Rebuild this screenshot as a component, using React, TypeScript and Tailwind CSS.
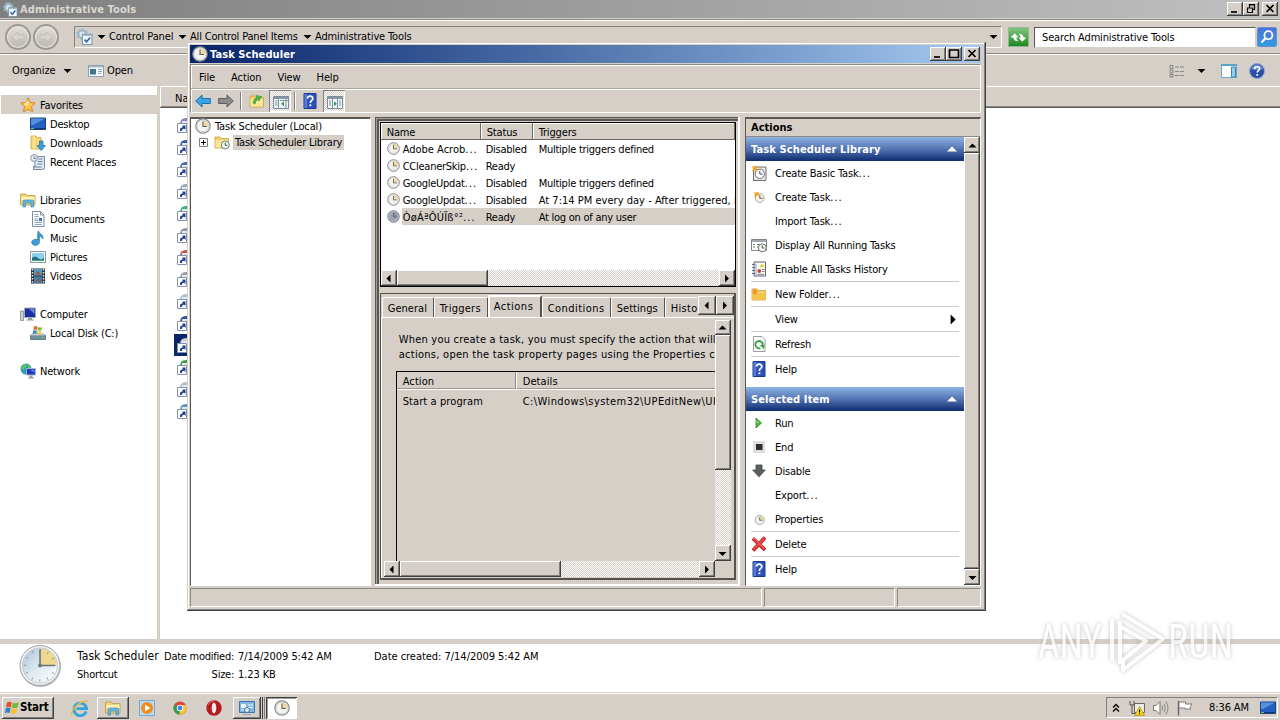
import type { ReactNode } from "react";
import clsx from "clsx";

const RAISED =
  "bg-[#d5cfc8] shadow-[inset_-1px_-1px_#404040,inset_1px_1px_#fff,inset_-2px_-2px_#808080]";
const TRACK =
  "[background:repeating-conic-gradient(#fff_0_25%,#d5cfc8_0_50%)_0_0/2px_2px]";

type IconProps = { className?: string };

const Svg = ({
  className,
  children,
  box = 16,
}: IconProps & { children: ReactNode; box?: number }) => (
  <svg
    viewBox={`0 0 ${box} ${box}`}
    className={clsx("shrink-0", className ?? "h-4 w-4")}
    fill="none"
  >
    {children}
  </svg>
);

const ClockIcon = ({
  className,
  face = "#f4f4ee",
  slice = "#f0d9a0",
}: IconProps & { face?: string; slice?: string }) => (
  <Svg className={className}>
    <circle cx="8" cy="8" r="7.2" fill={face} stroke="#85898c" strokeWidth="1.2" />
    <path d="M8 8V2.4A5.6 5.6 0 0 1 13.6 8Z" fill={slice} />
    <circle cx="8" cy="8" r="5.9" stroke="#c9ccce" strokeWidth="0.8" />
    <path d="M8 3.5V8.5H12" stroke="#5a5f66" strokeWidth="1.1" />
  </Svg>
);

const BigClockIcon = () => (
  <Svg className="h-[44px] w-[44px]" box={44}>
    <defs>
      <linearGradient id="face" x1="0" y1="0" x2="1" y2="1">
        <stop offset="0" stopColor="#a9c3d6" />
        <stop offset="0.5" stopColor="#dfeaf0" />
        <stop offset="1" stopColor="#fff" />
      </linearGradient>
    </defs>
    <circle cx="22.5" cy="22.5" r="20.5" fill="#b9bcbe" />
    <circle cx="22" cy="21.5" r="20" fill="#f1f2f2" stroke="#9da3a6" />
    <circle cx="22" cy="21.5" r="17.5" fill="url(#face)" stroke="#c3cacd" />
    <path d="M22 21.5V4.5A17 17 0 0 1 39 21.5Z" fill="#f0d690" />
    <circle cx="22" cy="21.5" r="15" stroke="#8b9aa4" strokeWidth="2.4" strokeDasharray="1 6.854" strokeDashoffset="0.5" />
    <path d="M22 5.5V21.5H37" stroke="#67747d" strokeWidth="1.6" />
    <circle cx="22" cy="21.5" r="2" fill="#6c7880" />
  </Svg>
);

const HelpIcon = ({ className }: IconProps) => (
  <Svg className={className}>
    <path d="M2 0.5H14V15.5H2Z" fill="#2f52b8" stroke="#1d3b94" />
    <path d="M2.5 1H5V15H2.5Z" fill="#5b7cd6" />
    <path d="M5.6 5.6C5.6 2.4 10.8 2.4 10.8 5.4C10.8 7.6 8.3 7.4 8.3 10" stroke="#fff" strokeWidth="1.7" />
    <path d="M7.4 11.4H9.3V13.2H7.4Z" fill="#fff" />
  </Svg>
);

const FolderIcon = ({ className, children }: IconProps & { children?: ReactNode }) => (
  <Svg className={className}>
    <path d="M1 3H6L7.5 4.5H14.5V14H1Z" fill="#f3cf6b" stroke="#c99f3c" strokeWidth="0.8" />
    <path d="M1.5 6H14V13.5H1.5Z" fill="#fbe597" />
    {children}
  </Svg>
);

const LibraryIcon = ({ className }: IconProps) => (
  <Svg className={className}>
    <path d="M0.5 2H6L7.5 3.5H15V13H0.5Z" fill="#f2d578" stroke="#b99b46" strokeWidth="0.8" />
    <path d="M1.5 5H14.5V8H1.5Z" fill="#fdf2b8" />
    <path d="M3 15V9.5Q3 8 5 8H12Q13.5 8 13.5 9.5V15H11V11H5.5V15Z" fill="#64b7e0" stroke="#3b86b5" strokeWidth="0.7" />
  </Svg>
);

const ArrowIcon = ({ back }: { back?: boolean }) => (
  <Svg className="h-4 w-4">
    <path
      d={back ? "M0.7 8L7 2V5.5H15.3V10.5H7V14Z" : "M15.3 8L9 2V5.5H0.7V10.5H9V14Z"}
      fill={back ? "#3da5e4" : "#8c8c8c"}
      stroke={back ? "#1c6fae" : "#5b5b5b"}
    />
  </Svg>
);

const PaneIcon = ({ right }: { right?: boolean }) => (
  <Svg className="h-4 w-4">
    <path d="M0.5 2.5H15.5V14.5H0.5Z" fill="#f2f5f7" stroke="#808a94" />
    <path d="M1 3H15V5H1Z" fill="#8397ab" />
    <path d={right ? "M10.5 5V14M12 7H14M12 9H14M12 11H14M2 7H4M2 9H4M2 11H4M5.5 5V14" : "M5.5 5V14M2 7H4.5M2 9H4.5M2 11H4.5M7 6.5H15M13 5V14"} stroke="#7c90a6" />
    <path d={right ? "M7 7.2L9.8 9.7L7 12.2Z" : "M11 7.2L8 9.7L11 12.2Z"} fill="#2e9a4a" />
  </Svg>
);

const StarIcon = () => (
  <Svg>
    <path d="M8 0.8L10.1 5.4L15.2 6L11.5 9.5L12.5 14.8L8 12.2L3.5 14.8L4.5 9.5L0.8 6L5.9 5.4Z" fill="#fbc64b" stroke="#dc8420" />
    <path d="M8 3L9.2 6.3L7 9L4 7Z" fill="#ffe79c" />
  </Svg>
);

const DesktopIcon = ({ className }: IconProps) => (
  <Svg className={className}>
    <path d="M0.5 2H15.5V13.5H0.5Z" fill="#2460c0" stroke="#1a4183" />
    <path d="M1 2.5H15L3 9H1Z" fill="#5590df" />
    <path d="M1 12H15V13H1Z" fill="#16386f" />
    <path d="M1 12H4V13H1Z" fill="#63c06c" />
  </Svg>
);

const DownloadsIcon = () => (
  <Svg>
    <path d="M1 1H6L7 2.5H11V14H1Z" fill="#f6d875" stroke="#c7a444" strokeWidth="0.8" />
    <path d="M4 1V14" stroke="#fff3bd" />
    <path d="M9.5 6H13V10.5H15.5L11.3 15.5L7 10.5H9.5Z" fill="#3d9be0" stroke="#1f6aae" strokeWidth="0.7" />
  </Svg>
);

const RecentIcon = () => (
  <Svg>
    <path d="M4.5 2.5H14.5V13.5Q14.5 15.5 12.5 15.5H3.5V12.5H5Z" fill="#dfe9f1" stroke="#77889a" />
    <circle cx="4" cy="4" r="3.4" fill="#eef1f4" stroke="#8794a1" />
    <path d="M4 2V4.5H6M8.5 5H12.5M7.5 7.5H12.5M7.5 10H12.5M3.5 13H11.5" stroke="#6b85a2" />
  </Svg>
);

const DocumentIcon = () => (
  <Svg>
    <path d="M2.5 0.5H10.5L14 4V15.5H2.5Z" fill="#fbfdff" stroke="#7d8da2" />
    <path d="M10.5 0.5V4H14" stroke="#7d8da2" />
    <path d="M4.5 3.5H8.5M4.5 5.5H8.5M4.5 11.5H12M4.5 13.5H12" stroke="#8fa7c5" />
    <path d="M4.5 8H8M4.5 9.5H8" stroke="#8fa7c5" />
    <path d="M9 7H12V10H9Z" fill="#3a6eb0" />
  </Svg>
);

const MusicIcon = () => (
  <Svg>
    <path d="M8 1C9 4 13.5 4 13 9C12.5 7 10.5 6.5 9.3 6.5V12.2A3.8 3 0 1 1 7.5 9.8Z" fill="#3c9ddc" stroke="#1c6dab" strokeWidth="0.7" />
  </Svg>
);

const PictureIcon = () => (
  <Svg>
    <path d="M0.5 2.5H15.5V13.5H0.5Z" fill="#fff" stroke="#8597a6" />
    <path d="M2 4H14V12H2Z" fill="#8fd0ee" />
    <path d="M2 9Q5 6 8 9T14 8.5V12H2Z" fill="#1f6d7e" />
    <path d="M2 11H14V12H2Z" fill="#3dae75" />
  </Svg>
);

const VideoIcon = () => (
  <Svg>
    <path d="M1 0.5H15V15.5H1Z" fill="#30353c" />
    <path d="M4 1H12V7.5H4Z" fill="#4f9bc5" />
    <path d="M4 8.5H12V15H4Z" fill="#3f80b1" />
    <path d="M5 6L8 3L11 7ZM5 14L9 10L11 13Z" fill="#a5562e" />
    <path d="M2.5 1V15M13.5 1V15" stroke="#e8edf0" strokeWidth="1.5" strokeDasharray="1.5 1.5" />
  </Svg>
);

const ComputerIcon = () => (
  <Svg>
    <path d="M0.5 5H3.5V14.5H0.5Z" fill="#c9d2d5" stroke="#7b898d" strokeWidth="0.8" />
    <path d="M4.5 2H15.5V11.5H4.5Z" fill="#1c2fa2" stroke="#a3adb5" />
    <path d="M9 3H14.5V8Z" fill="#6684dd" />
    <path d="M8 12H12V13.5H14V14.5H6V13.5H8Z" fill="#97a0a6" />
  </Svg>
);

const DiskIcon = () => (
  <Svg>
    <path d="M0.5 10H15.5V14.5H0.5Z" fill="#70909b" stroke="#506c76" strokeWidth="0.8" />
    <path d="M2.5 8H13L15.5 10.5H0.5Z" fill="#bfced3" />
    <path d="M4 1.5Q6 0.5 7.5 1.5L7 5Q5.5 4 3.3 5Z" fill="#ec6b2c" />
    <path d="M8 2Q10 3 12 2L11.4 5.3Q9.5 6 7.5 5.2Z" fill="#7bb93a" />
    <path d="M3.2 5.6Q5.5 4.7 7 5.7L6.4 9Q4.5 8 2.6 9Z" fill="#3c88cf" />
    <path d="M7.4 6Q9.5 7 11.3 6L10.6 9Q9 9.8 6.9 9Z" fill="#fac533" />
    <path d="M12 12.5H14" stroke="#82e36b" />
  </Svg>
);

const NetworkIcon = () => (
  <Svg>
    <circle cx="6" cy="6" r="5.5" fill="#2d9cbc" />
    <path d="M2 3Q5 0 7 2Q5 5 3 7Q1 6 2 3ZM8 1Q11 3 11 6H8Z" fill="#66c25b" />
    <path d="M6.5 5.5H15.5V12H6.5Z" fill="#1d39b4" stroke="#a8b4cb" />
    <path d="M10 6.5H14.5V10Z" fill="#6685e4" />
    <path d="M9.5 12.5H12.5V14.5H14V15.5H8V14.5H9.5Z" fill="#8e9aaa" />
  </Svg>
);

const ToolsIcon = ({ className }: IconProps) => (
  <Svg className={className}>
    <circle cx="5.8" cy="5.8" r="3.6" fill="#dce7ee" stroke="#9bb8ca" strokeWidth="2" />
    <circle cx="5.8" cy="5.8" r="5" stroke="#9bb8ca" strokeWidth="1.4" strokeDasharray="1.8 2.1" />
    <path d="M6 6H15V15.5H6Z" fill="#f4f9fd" stroke="#7996ac" />
    <path d="M6 6H15V7.5H6Z" fill="#9bb7cc" />
    <path d="M8 11L10 13L13.2 9" stroke="#2764ae" strokeWidth="1.5" />
  </Svg>
);

const WindowsIcon = () => (
  <Svg className="h-4 w-4">
    <path d="M3 2.5Q5.5 1 7.7 2.3L6.8 7.2Q4.5 6 2 7.4Z" fill="#e8502a" />
    <path d="M8.5 2.7Q11 4 14.8 2.5L13.6 7.4Q10.5 8.7 7.7 7.4Z" fill="#77b73b" />
    <path d="M1.8 8.2Q4.2 7 6.6 8.1L5.7 13Q3.3 12 0.8 13.3Z" fill="#3380cd" />
    <path d="M7.5 8.3Q10.3 9.6 13.4 8.3L12.3 13Q9.3 14.5 6.5 13.2Z" fill="#f9be2c" />
  </Svg>
);

type WinGlyph = "min" | "max" | "restore" | "close";
const GLYPHS: Record<WinGlyph, string> = {
  min: "M4 10H10",
  max: "M3.5 2.5V10.5H12.5V2.5M3 3H13",
  restore: "M6.5 6V2.5H11.5V7.5H10M6 3H12M4.5 5.5V10.5H9.5V5.5M4 6H10",
  close: "M4.5 3L11.5 10M11.5 3L4.5 10",
};

const WinButton = ({ glyph }: { glyph: WinGlyph }) => (
  <div className={clsx("h-[14px] w-[16px]", RAISED)}>
    <svg viewBox="0 0 16 14" className="h-[14px] w-[16px]" fill="none">
      <path d={GLYPHS[glyph]} stroke="#000" strokeWidth={glyph === "restore" ? 1.2 : 1.7} />
    </svg>
  </div>
);

const TRIANGLES = {
  up: "M3.5 9.5L7.5 5.5L11.5 9.5Z",
  down: "M3.5 6L11.5 6L7.5 10Z",
  left: "M9.5 3.5V11.5L5.5 7.5Z",
  right: "M6 3.5V11.5L10 7.5Z",
};

const Triangle = ({ dir, className }: { dir: keyof typeof TRIANGLES; className?: string }) => (
  <svg viewBox="0 0 15 15" className={clsx("h-[15px] w-[15px] shrink-0", className)}>
    <path d={TRIANGLES[dir]} fill="currentColor" />
  </svg>
);

const ScrollButton = ({
  dir,
  className = "h-4 w-4",
}: {
  dir: keyof typeof TRIANGLES;
  className?: string;
}) => (
  <div className={clsx("flex shrink-0 items-center justify-center overflow-hidden", RAISED, className)}>
    <Triangle dir={dir} />
  </div>
);

// trailing dots are set wider than the rest of the label
const Dotted = ({ text }: { text: string }) =>
  text.endsWith("...") ? (
    <>
      {text.slice(0, -3)}
      <span className="tracking-[1px]">...</span>
    </>
  ) : (
    <>{text}</>
  );

const CheckedTool = ({ children }: { children: ReactNode }) => (
  <div
    className={clsx(
      "flex h-[22px] w-[22px] items-center justify-center pt-px pl-px shadow-[inset_1px_1px_#808080,inset_-1px_-1px_#fff]",
      TRACK
    )}
  >
    {children}
  </div>
);

const ToolDivider = ({ className }: IconProps) => (
  <div className={clsx("h-[18px] w-[2px] border-l border-[#808080] border-r border-r-white", className)} />
);

/* ---------- explorer window ---------- */

const places = [
  { label: "Favorites", icon: <StarIcon />, root: true, active: true },
  { label: "Desktop", icon: <DesktopIcon /> },
  { label: "Downloads", icon: <DownloadsIcon /> },
  { label: "Recent Places", icon: <RecentIcon /> },
  null,
  { label: "Libraries", icon: <LibraryIcon />, root: true },
  { label: "Documents", icon: <DocumentIcon /> },
  { label: "Music", icon: <MusicIcon /> },
  { label: "Pictures", icon: <PictureIcon /> },
  { label: "Videos", icon: <VideoIcon /> },
  null,
  { label: "Computer", icon: <ComputerIcon />, root: true },
  { label: "Local Disk (C:)", icon: <DiskIcon /> },
  null,
  { label: "Network", icon: <NetworkIcon />, root: true },
];

const shortcutTints = [
  "#8b7fc0", "#3457a8", "#4a6c9c", "#9aa7b4", "#3cae78", "#8e9aa8", "#c45650",
  "#9b9b9b", "#a9c0d0", "#2f4f94", "#c9cdd2", "#3f9a4d", "#b4bcc4", "#5d94c4",
];

const ShortcutIcon = ({ tint }: { tint: string }) => (
  <Svg>
    <path d="M3 7Q3 1 9 1H15V8H3Z" fill={tint} />
    <path d="M5 4H15V6H5Z" fill="#e4ebf2" />
    <path d="M0.5 6.5H9.5V15.5H0.5Z" fill="#fff" stroke="#8194ac" />
    <path d="M3 14Q2.5 10.5 5.5 10.5V8.5H8.5V13L7.3 11.8Q5 11.5 4.8 14Z" fill="#1f3f94" />
  </Svg>
);

const ExplorerTitle = () => (
  <div className="flex h-[18px] shrink-0 items-center bg-linear-to-r from-[#7f7f7f] to-[#c0c0c0] pr-[2px] pl-[3px]">
    <ToolsIcon className="mt-px h-[15px] w-[15px]" />
    <span className="ml-[2px] text-[11px] font-bold tracking-[0.12px] text-[#dcd8d0]">
      Administrative Tools
    </span>
    <div className="ml-auto flex">
      <WinButton glyph="min" />
      <WinButton glyph="restore" />
      <div className="w-[3px]" />
      <WinButton glyph="close" />
    </div>
  </div>
);

const NavCircle = ({ dir }: { dir: "left" | "right" }) => (
  <div className="flex h-[26px] w-[26px] items-center justify-center rounded-full border-2 border-[#9c9894] bg-linear-to-b from-[#e3dfda] to-[#bcb7b1] shadow-[inset_0_0_0_1px_#e9e6e2]">
    <Svg className="h-4 w-4">
      <path
        d={dir === "left" ? "M2 8L8 3V6H14V10H8V13Z" : "M14 8L8 3V6H2V10H8V13Z"}
        fill="#d9d5d0"
        stroke="#c2bdb7"
      />
    </Svg>
  </div>
);

const AddressBar = () => (
  <div className="flex h-[34px] shrink-0 items-center border-t border-b border-t-white border-b-[#8a8680] pr-px pl-[5px] shadow-[0_-1px_#8a8680,0_1px_#fff]">
    <div className="flex gap-[2px]">
      <NavCircle dir="left" />
      <NavCircle dir="right" />
    </div>
    <div className="ml-[15px] flex h-[22px] w-[928px] items-center border border-[#848078] border-r-white border-b-white pb-px pl-px">
      <ToolsIcon className="h-[17px] w-[17px]" />
      <Triangle dir="down" className="ml-px" />
      <span className="w-[66px] tracking-[-0.08px]">Control Panel</span>
      <Triangle dir="down" />
      <span className="w-[110px] tracking-[-0.18px]">All Control Panel Items</span>
      <Triangle dir="down" />
      <span className="tracking-[-0.14px]">Administrative Tools</span>
      <Triangle dir="down" className="mr-0 ml-auto" />
    </div>
    <div className="ml-[6px] flex h-[20px] w-[21px] items-center justify-center border border-[#97b797] bg-linear-to-b from-[#7ec57d] to-[#128a1c]">
      <Svg className="h-[17px] w-[17px]">
        <path d="M0.5 8L4.5 4L8 8H5.8Q6 10 8 11.5Q3.5 11.5 3.2 8ZM15.5 8L11.5 12L8 8H10.2Q10 6 8 4.5Q12.5 4.5 12.8 8Z" fill="#fff" />
      </Svg>
    </div>
    <div className="ml-[5px] flex h-[21px] w-[222px] items-center border border-[#5b5854] border-r-[#d5cfc8] border-b-[#d5cfc8] bg-white pl-[7px] tracking-[-0.15px]">
      Search Administrative Tools
    </div>
    <div className="ml-px flex h-[20px] w-[20px] items-center justify-center rounded-[2px] border border-[#6b8dd0] bg-linear-to-b from-[#4b72d8] to-[#2f9be2]">
      <Svg className="h-[16px] w-[16px]">
        <circle cx="9.4" cy="6.2" r="4" stroke="#fff" strokeWidth="1.8" />
        <path d="M6.5 9.3L2.5 13.5" stroke="#fff" strokeWidth="2.2" />
      </Svg>
    </div>
  </div>
);

const CommandBar = () => (
  <div className="flex h-[32px] shrink-0 items-center pt-px pr-[15px] pl-[12px]">
    <span className="w-[48px] tracking-[-0.1px]">Organize</span>
    <Triangle dir="down" />
    <Svg className="ml-[13px] h-4 w-4">
      <path d="M0.5 2.5H15.5V13.5H0.5Z" fill="#f7fafc" stroke="#8ba0b0" />
      <path d="M1 3H15V4.5H1Z" fill="#a5bccd" />
      <path d="M2 6H8V11.5H2Z" fill="#3a7485" />
      <path d="M10 6.5H14M10 8.5H14M10 10.5H13" stroke="#92a4b4" />
    </Svg>
    <span className="ml-[3px] tracking-[-0.1px]">Open</span>
    <Svg className="mr-[9px] ml-auto h-4 w-4">
      <path d="M1 2.5H4V5.5H1ZM1 7H4V10H1ZM1 11.5H4V14H1Z" stroke="#70757b" strokeWidth="0.8" />
      <path d="M6 4H15M6 8.5H15M6 12.5H15" stroke="#85898e" strokeDasharray="4 1" />
    </Svg>
    <Triangle dir="down" />
    <Svg className="ml-[12px] h-4 w-4">
      <path d="M0.5 1.5H15.5V14.5H0.5Z" fill="#fff" stroke="#6fa5c6" />
      <path d="M0 1H16V3H0Z" fill="#5ba2cb" />
      <path d="M10.5 4V14H14.5V4Z" fill="#8ecdec" stroke="#3e85ad" />
    </Svg>
    <Svg className="ml-[12px] h-4 w-4">
      <circle cx="8" cy="8" r="7.5" fill="#2a4fa8" stroke="#90a4d4" />
      <path d="M2 6Q4 1.5 8 1.5T14 6Q8 8 2 6Z" fill="#6c8dd5" />
      <path d="M5.6 6C5.6 3 10.6 3 10.6 5.8C10.6 7.6 8.2 7.6 8.2 9.6" stroke="#fff" strokeWidth="1.6" />
      <path d="M7.3 11H9.1V12.8H7.3Z" fill="#fff" />
    </Svg>
  </div>
);

const Sidebar = () => (
  <div className="w-[157px] shrink-0 bg-white pt-[9px] pl-px">
    {places.map((place, i) =>
      place ? (
        <div
          key={i}
          className={clsx(
            "flex h-[19px] items-center gap-1",
            place.root ? "pl-[19px]" : "pl-[29px]",
            place.active && "bg-[#d5cfc8]"
          )}
        >
          {place.icon}
          <span className="pt-[2px] tracking-[-0.2px]">{place.label}</span>
        </div>
      ) : (
        <div key={i} className="h-[19px]" />
      )
    )}
  </div>
);

const FileList = () => (
  <div className="flex-1 bg-white">
    <div className="flex h-[22px] items-center border-b border-[#5f5b57] bg-[#d5cfc8] pt-[3px] pl-[15px] shadow-[inset_1px_1px_#fff,inset_0_-1px_#8b8781]">
      Name
    </div>
    <div className="pt-[6px]">
      {shortcutTints.map((tint, i) => (
        <div
          key={i}
          className={clsx("ml-[14px] flex h-[22px] w-[40px] items-center pl-[3px]", i === 10 && "bg-[#0a246a]")}
        >
          <ShortcutIcon tint={tint} />
        </div>
      ))}
    </div>
  </div>
);

const DetailsPane = () => (
  <div className="flex h-[48px] shrink-0 bg-white pl-[18px]">
    <BigClockIcon />
    <div className="ml-[15px] flex w-[87px] flex-col pt-[4px]">
      <span className="h-[17px] text-[12px] leading-[16px] tracking-[0.08px]">Task Scheduler</span>
      <span className="h-[18px] pt-px leading-[18px] tracking-[-0.2px]">Shortcut</span>
    </div>
    <div className="grid w-[190px] grid-cols-[70px_1fr] content-start gap-x-[4px] pt-[4px] leading-[18px] tracking-[-0.25px] whitespace-nowrap">
      <span className="text-right">Date modified:</span>
      <span className="tracking-[-0.05px]">7/14/2009 5:42 AM</span>
      <span className="text-right">Size:</span>
      <span className="tracking-[-0.1px]">1.23 KB</span>
    </div>
    <div className="ml-[20px] pt-[4px] leading-[18px] tracking-[-0.03px]">
      Date created: 7/14/2009 5:42 AM
    </div>
  </div>
);

/* ---------- task scheduler window ---------- */

const tasks = [
  { name: "Adobe Acrob...", status: "Disabled", trigger: "Multiple triggers defined", spacing: "tracking-[0px]" },
  { name: "CCleanerSkip...", status: "Ready", trigger: "" },
  { name: "GoogleUpdat...", status: "Disabled", trigger: "Multiple triggers defined" },
  { name: "GoogleUpdat...", status: "Disabled", trigger: "At 7:14 PM every day - After triggered, repeat", wide: true },
  { name: "ÒøÁªÔÚÏß°²...", status: "Ready", trigger: "At log on of any user", selected: true, spacing: "tracking-[0.2px]" },
];

const HEAD_CELL =
  "flex items-center bg-[#d5cfc8] pt-[2px] pl-[6px] shadow-[inset_-1px_-1px_#6b6762,inset_1px_1px_#fff]";

const TaskList = () => (
  <div className="flex h-[165px] w-[356px] flex-col overflow-hidden border border-black bg-white">
    <div className="grid h-[17px] shrink-0 grid-cols-[100px_52px_1fr] tracking-[-0.15px]">
      <div className={HEAD_CELL}>Name</div>
      <div className={HEAD_CELL}>Status</div>
      <div className={HEAD_CELL}>Triggers</div>
    </div>
    {tasks.map((task, i) => (
      <div
        key={i}
        className="grid h-[17px] shrink-0 grid-cols-[21px_79px_52px_1fr] items-center tracking-[-0.25px] whitespace-nowrap"
      >
        <ClockIcon
          className="ml-[6px] h-[13px] w-[13px]"
          face={task.selected ? "#9aa3b4" : "#f4f1e8"}
          slice={task.selected ? "#8791a8" : "#f3d9a4"}
        />
        <span className={clsx("h-[17px] pl-px leading-[19px]", task.spacing, task.selected && "bg-[#d5cfc8]")}>
          <Dotted text={task.name} />
        </span>
        <span className={clsx("h-[17px] pl-[5px] leading-[19px]", task.selected && "bg-[#d5cfc8]")}>{task.status}</span>
        <span
          className={clsx(
            "h-[17px] overflow-hidden pl-[6px] leading-[19px]",
            task.selected && "bg-[#d5cfc8]",
            task.wide && "tracking-[0.02px]"
          )}
        >
          {task.trigger}
        </span>
      </div>
    ))}
    <div className={clsx("mt-auto flex h-4 shrink-0", TRACK)}>
      <ScrollButton dir="left" />
      <div className={clsx("w-[91px]", RAISED)} />
      <ScrollButton dir="right" className="ml-auto h-4 w-4" />
    </div>
  </div>
);

const TAB = "h-[20px] border border-white border-r-[#55524e] border-b-0 pl-[5px] pt-[4px] rounded-t-[2px]";

const Tabs = () => (
  <div className="flex h-[23px] items-end pl-px tracking-[0.05px]">
    <div className={clsx(TAB, "w-[52px]")}>General</div>
    <div className={clsx(TAB, "w-[54px] tracking-[0.25px]")}>Triggers</div>
    <div className="h-[22px] w-[54px] rounded-t-[2px] border-2 border-b-0 border-white border-r-[#55524e] border-l-white bg-[#d5cfc8] pt-[3px] pl-[4px] tracking-[0.5px]">
      Actions
    </div>
    <div className={clsx(TAB, "w-[69px] tracking-[0.45px]")}>Conditions</div>
    <div className={clsx(TAB, "w-[54px]")}>Settings</div>
    <div className={clsx(TAB, "w-[33px] overflow-hidden border-r-transparent tracking-[0.35px]")}>History</div>
    <div className="mb-[2px] flex">
      <ScrollButton dir="left" className="h-[19px] w-[18px]" />
      <ScrollButton dir="right" className="h-[19px] w-[18px]" />
    </div>
  </div>
);

const ActionsTab = () => (
  <div className="flex h-[261px] flex-col border-t border-l border-white pt-[2px] pl-[2px]">
    <div className="flex h-[241px]">
      <div className="w-[331px] overflow-hidden pt-[12px] pl-[12px]">
        <p className="w-[460px] pl-[3px] leading-[15px] tracking-[0.22px] whitespace-nowrap">
          When you create a task, you must specify the action that will occur
          <br />
          <span className="tracking-[0.28px]">
            actions, open the task property pages using the Properties command
          </span>
        </p>
        <div className="mt-[9px] h-[220px] w-[420px] border border-black tracking-[0.1px]">
          <div className="flex h-[18px] items-center border-b border-[#fff] shadow-[inset_0_-1px_#9b9790]">
            <div className="h-[17px] w-[119px] border-r border-[#8b8781] pt-[3px] pl-[6px]">Action</div>
            <div className="h-[17px] border-l border-white pt-[3px] pl-[6px]">Details</div>
          </div>
          <div className="flex h-[22px] items-center">
            <span className="w-[126px] pl-[6px]">Start a program</span>
            <span className="tracking-[0.42px]">C:\Windows\system32\UPEditNew\UPEdit.exe</span>
          </div>
        </div>
      </div>
      <div className={clsx("flex w-4 flex-col", TRACK)}>
        <ScrollButton dir="up" className="h-[15px] w-4" />
        <div className={clsx("h-[135px]", RAISED)} />
        <ScrollButton dir="down" className="mt-auto h-4 w-4" />
      </div>
    </div>
    <div className={clsx("flex h-4 w-[331px]", TRACK)}>
      <ScrollButton dir="left" />
      <div className={clsx("w-[161px]", RAISED)} />
      <ScrollButton dir="right" className="ml-auto h-4 w-4" />
    </div>
  </div>
);

const MiddlePane = () => (
  <div className="ml-[4px] h-[469px] w-[366px] border-r-2 border-b-2 border-white shadow-[inset_1px_1px_#5a5754,inset_2px_2px_#a19d97,inset_4px_4px_#5a5754]">
    <div className="pt-[5px] pl-[5px]">
      <div className="bg-[#d5cfc8] pb-px">
        <TaskList />
        <div className="mt-[6px] h-[287px] w-[356px] border border-[#55524e] border-r-2 border-b-2">
          <Tabs />
          <ActionsTab />
        </div>
      </div>
    </div>
  </div>
);

type Action = { label: string; icon?: ReactNode; sep?: boolean; sub?: boolean };

const libraryActions: Action[] = [
  {
    label: "Create Basic Task...",
    icon: (
      <Svg>
        <path d="M2.5 2H15V15.5H2.5Z" fill="#e6e6e6" stroke="#77706c" />
        <circle cx="8.8" cy="8.8" r="4.6" fill="#fff" stroke="#6d7378" />
        <path d="M8.8 6V9H11.5" stroke="#4f555b" />
        <path d="M1 1L4 2L6 0.5V4L8 5L4.5 5.5L1 6.5L2 3.8Z" fill="#f5a32b" />
      </Svg>
    ),
  },
  {
    label: "Create Task...",
    icon: (
      <Svg>
        <circle cx="8.8" cy="9" r="4.4" fill="#fdf3df" stroke="#a6a7b0" />
        <path d="M8.8 6V9.2H11.5" stroke="#5f6068" />
        <path d="M2.5 3L5 3.7L7.3 2.5V5L9 6L6 6.8L3 8L4 5.2Z" fill="#f39e1f" />
      </Svg>
    ),
  },
  { label: "Import Task..." },
  {
    label: "Display All Running Tasks",
    icon: (
      <Svg>
        <path d="M0.5 2.5H15.5V13.5H0.5Z" fill="#fff" stroke="#7d8487" />
        <path d="M1 3H15V5H1Z" fill="#a3abaf" />
        <path d="M2 7.5H4M6 7.5H9M2 10H4M6 10H8" stroke="#6b7478" />
        <circle cx="11.3" cy="10.8" r="4" fill="#f1f5ee" stroke="#6d7875" />
        <path d="M11.3 8.5V11H13.3" stroke="#4b5754" />
      </Svg>
    ),
  },
  {
    label: "Enable All Tasks History",
    sep: true,
    icon: (
      <Svg>
        <path d="M3 1H14.5V15H3Z" fill="#fdfdf2" stroke="#5d6678" />
        <path d="M1 3.5H4M1 6.5H4M1 9.5H4M1 12.5H4" stroke="#5c6f94" />
        <path d="M5 2.5V14.5" stroke="#7f9fd4" />
        <path d="M8.5 6L11 2.5L13.5 6Z" fill="#e6c62c" />
        <circle cx="8.3" cy="10" r="1.9" fill="#c8473a" />
        <path d="M11 8.5H13.5M11 10.5H13.5M6.5 13.3H13" stroke="#6f7c93" />
      </Svg>
    ),
  },
  {
    label: "New Folder...",
    sep: true,
    icon: (
      <FolderIcon>
        <path d="M1.5 6.5H14.5V14H1.5Z" fill="#f9c24f" />
        <path d="M2 5L4 2L5 4.5L8 5L5.5 6.5L6 9L3.7 7.4L1.5 8.6Z" fill="#f5931c" />
      </FolderIcon>
    ),
  },
  { label: "View", sep: true, sub: true },
  {
    label: "Refresh",
    sep: true,
    icon: (
      <Svg>
        <path d="M2.5 0.5H11L14 3.5V15.5H2.5Z" fill="#fafcfa" stroke="#98a09a" />
        <path d="M9.2 12.2A3.7 3.7 0 1 1 11.7 9.4" stroke="#35a047" strokeWidth="1.8" />
        <path d="M8.7 9H13.6L12.8 13Z" fill="#35a047" />
      </Svg>
    ),
  },
  { label: "Help", icon: <HelpIcon className="h-4 w-4" /> },
];

const selectedActions: Action[] = [
  {
    label: "Run",
    icon: (
      <Svg>
        <path d="M5 3L10.5 8L5 13Z" fill="#45b33c" stroke="#2c8e2c" strokeWidth="0.8" />
        <path d="M5.5 5L8 7.5L5.5 8Z" fill="#98e08a" />
      </Svg>
    ),
  },
  {
    label: "End",
    icon: (
      <Svg>
        <path d="M2 2H14V14H2Z" fill="#dcdedf" />
        <path d="M5 5H11.5V11H5Z" fill="#2c2e31" />
      </Svg>
    ),
  },
  {
    label: "Disable",
    icon: (
      <Svg>
        <path d="M5 2H11V7H14.3L8 13.8L1.7 7H5Z" fill="#5c5f5f" stroke="#3f4242" strokeWidth="0.8" />
      </Svg>
    ),
  },
  { label: "Export..." },
  {
    label: "Properties",
    sep: true,
    icon: (
      <Svg>
        <circle cx="8.7" cy="9" r="4.6" fill="#f0f1ea" stroke="#a7afb5" />
        <path d="M8.7 9V5.5A3.5 3.5 0 0 1 12.2 9Z" fill="#f1d77b" />
        <path d="M8.7 6V9.3H11.5" stroke="#6e7a84" />
      </Svg>
    ),
  },
  {
    label: "Delete",
    sep: true,
    icon: (
      <Svg>
        <path d="M2 2.5L14 14M14 1.5L2 14.5" stroke="#c21f1f" strokeWidth="3.8" />
        <path d="M2 2L13.5 13M13.5 2L2.5 13.5" stroke="#ee5050" strokeWidth="1.8" />
      </Svg>
    ),
  },
  { label: "Help", icon: <HelpIcon className="h-4 w-4" /> },
];

const ActionGroup = ({ title, actions }: { title: string; actions: Action[] }) => (
  <div>
    <div className="flex h-[24px] items-center justify-between bg-linear-to-b from-[#8db4e3] via-[#5474b2] to-[#0f2c72] pr-[4px] pl-[5px] text-[11px] font-bold text-white">
      <span className="tracking-[0.12px]">{title}</span>
      <Svg className="h-4 w-4">
        <path d="M3 10.5L8 5.5L13 10.5Z" fill="#fff" />
      </Svg>
    </div>
    {actions.map((action) => (
      <div key={action.label}>
        <div className="flex h-[24px] items-center pr-[4px] pl-[5px]">
          <div className="w-[24px]">{action.icon}</div>
          <span className="tracking-[-0.18px]">
            <Dotted text={action.label} />
          </span>
          {action.sub && <Triangle dir="right" className="mr-0 ml-auto scale-125" />}
        </div>
        {action.sep && <div className="mr-[5px] ml-[5px] h-px bg-[#c9c9c9]" />}
      </div>
    ))}
  </div>
);

const ActionsPane = () => (
  <div className="ml-[5px] h-[469px] w-[236px] border border-t-2 border-[#5a5754] border-r-white border-b-white bg-white">
    <div className="h-[18px] border-b border-[#8b8781] bg-[#d5cfc8] pl-[5px] text-[11px] leading-[17px] font-bold">
      Actions
    </div>
    <div className="flex h-[448px]">
      <div className="flex w-[218px] flex-col gap-[6px]">
        <ActionGroup title="Task Scheduler Library" actions={libraryActions} />
        <ActionGroup title="Selected Item" actions={selectedActions} />
      </div>
      <div className="flex w-4 flex-col">
        <ScrollButton dir="up" />
        <div className={clsx("flex-1", RAISED)} />
        <ScrollButton dir="down" />
      </div>
    </div>
  </div>
);

const TreePane = () => (
  <div className="h-[469px] w-[181px] border border-[#5a5754] border-r-white border-b-white bg-white shadow-[inset_0_1px_#5a5754]">
    <div className="flex h-[16px] items-center pl-[4px]">
      <ClockIcon className="h-4 w-4" />
      <span className="ml-[4px] tracking-[-0.16px]">Task Scheduler (Local)</span>
    </div>
    <div className="flex h-[16px] items-center pl-[8px]">
      <Svg className="h-[9px] w-[9px]" box={9}>
        <path d="M0.5 0.5H8.5V8.5H0.5Z" fill="#fff" stroke="#808080" />
        <path d="M2 4.5H7M4.5 2V7" stroke="#000" />
      </Svg>
      <FolderIcon className="ml-[6px] h-4 w-4">
        <circle cx="11.3" cy="11" r="4" fill="#eef3ee" stroke="#6f8579" />
        <path d="M11.3 8.8V11.3H13.3" stroke="#46574e" />
      </FolderIcon>
      <span className="ml-[3px] h-[15px] bg-[#d5cfc8] px-[2px] leading-[15px] tracking-[-0.2px]">
        Task Scheduler Library
      </span>
    </div>
  </div>
);

const TaskSchedulerWindow = () => (
  <div className="absolute top-[42px] left-[187px] h-[569px] w-[799px] bg-[#d5cfc8] pt-[3px] pl-[3px] shadow-[inset_-1px_-1px_#404040,inset_1px_1px_#d5cfc8,inset_-2px_-2px_#808080,inset_2px_2px_#fff]">
    <div className="flex h-[18px] w-[791px] items-center bg-linear-to-r from-[#0a246a] to-[#a6caf0] pr-px pl-[2px] text-white">
      <ClockIcon className="h-4 w-4" />
      <span className="ml-[2px] text-[11px] font-bold tracking-[0.08px]">Task Scheduler</span>
      <div className="ml-auto flex text-black">
        <WinButton glyph="min" />
        <WinButton glyph="max" />
        <div className="w-[2px]" />
        <WinButton glyph="close" />
      </div>
    </div>
    <div className="mt-px w-[791px] border border-[#8b8781] border-r-white border-b-white shadow-[inset_1px_1px_#fff]">
      <div className="flex h-[24px] items-center gap-[16px] pl-[8px] tracking-[-0.1px]">
        <span>File</span>
        <span>Action</span>
        <span>View</span>
        <span>Help</span>
      </div>
      <div className="flex h-[23px] items-center border-t border-white pl-[4px] shadow-[0_-1px_#aaa6a0]">
        <ArrowIcon back />
        <div className="w-[7px]" />
        <ArrowIcon />
        <ToolDivider className="ml-[6px]" />
        <FolderIcon className="ml-[7px] h-4 w-4">
          <path d="M4 10Q5 5 8 4.5L7 2.5L12.5 3.5L9.8 8L9 6.5Q6.5 7 6 11Z" fill="#4db84a" stroke="#2e8b33" strokeWidth="0.6" />
        </FolderIcon>
        <div className="w-[4px]" />
        <CheckedTool>
          <PaneIcon />
        </CheckedTool>
        <ToolDivider className="ml-[3px]" />
        <HelpIcon className="ml-[6px] h-[16px] w-4" />
        <div className="w-[5px]" />
        <CheckedTool>
          <PaneIcon right />
        </CheckedTool>
      </div>
    </div>
    <div className="mt-[4px] flex w-[791px]">
      <TreePane />
      <MiddlePane />
      <ActionsPane />
    </div>
    <div className="mt-[2px] flex h-[19px] w-[791px] gap-[2px]">
      <div className="w-[572px] border border-[#8b8781] border-r-white border-b-white" />
      <div className="w-[131px] border border-[#8b8781] border-r-white border-b-white" />
      <div className="flex-1 border border-[#8b8781] border-r-white border-b-white" />
    </div>
  </div>
);

/* ---------- taskbar ---------- */

const Taskbar = () => (
  <div className="flex h-[28px] shrink-0 items-center border-t border-[#d5cfc8] bg-[#d5cfc8] pt-[2px] pl-[2px] shadow-[inset_0_1px_#fff]">
    <div className={clsx("flex h-[22px] w-[52px] items-center pl-[2px]", RAISED)}>
      <WindowsIcon />
      <span className="text-[11.5px] font-bold tracking-[-0.2px]">Start</span>
    </div>
    <Svg className="ml-[17px] h-[18px] w-[18px]">
      <path d="M13.5 11.2A5.6 5.6 0 1 1 13.8 8.5H5" stroke="#35a3dc" strokeWidth="2.5" />
      <path d="M1 14.5C-1 10 8 1 15 2.2" stroke="#edbb38" strokeWidth="1.3" />
    </Svg>
    <div className={clsx("ml-[8px] flex h-[22px] w-[32px] items-center justify-center", RAISED)}>
      <LibraryIcon className="h-4 w-4" />
    </div>
    <Svg className="ml-[10px] h-4 w-4">
      <path d="M0.5 0.5H15.5V15.5H0.5Z" fill="#b7dcf3" stroke="#6fa8cf" />
      <circle cx="8" cy="8" r="6" fill="#f28c1b" />
      <path d="M6 4.5L11.3 8L6 11.5Z" fill="#fff" />
    </Svg>
    <Svg className="ml-[18px] h-[14px] w-[14px]">
      <circle cx="8" cy="8" r="7.5" fill="#dd4435" />
      <path d="M8 8L1.5 4.2A7.5 7.5 0 0 0 7.5 15.5L11.3 9.9Z" fill="#2d9f51" />
      <path d="M8 8L7.5 15.5A7.5 7.5 0 0 0 14.5 4.6H8Z" fill="#fbc921" />
      <circle cx="8" cy="8" r="3.7" fill="#fff" />
      <circle cx="8" cy="8" r="2.8" fill="#4383ee" />
    </Svg>
    <Svg className="ml-[19px] h-4 w-4">
      <circle cx="8" cy="8" r="7.7" fill="#b51a20" />
      <ellipse cx="8" cy="8" rx="2.3" ry="5.4" fill="#f2e9e9" />
      <path d="M2 5Q4 1 8 1" stroke="#e76c6e" />
    </Svg>
    <div className={clsx("ml-[11px] flex h-[22px] w-[28px] items-center justify-center", RAISED)}>
      <Svg className="h-4 w-4">
        <path d="M0.5 1.5H15.5V12.5H0.5Z" fill="#7fb8e4" stroke="#3c76ae" />
        <path d="M2 4H7V8H2Z" fill="#eef7fd" />
        <path d="M9 5H14M9 7.5H14M2 10H7" stroke="#eef7fd" />
        <circle cx="8" cy="10" r="2.5" fill="#e1eef8" stroke="#3c76ae" />
        <path d="M4 14.5H12" stroke="#8ba3b7" />
      </Svg>
    </div>
    <div className="h-[22px] w-[2px] border-r border-[#404040]" />
    <div className="h-[22px] w-[2px] border-r border-[#808080]" />
    <div className="ml-px flex h-[22px] w-[31px] items-center justify-center bg-white shadow-[inset_1px_1px_#404040,inset_-1px_-1px_#fff,inset_2px_2px_#a09c96]">
      <ClockIcon className="h-4 w-4" />
    </div>
    <div className="mr-[2px] ml-auto flex h-[21px] w-[172px] items-center border border-[#808080] border-r-white border-b-white pl-[4px]">
      <Svg className="h-[10px] w-[10px]" box={10}>
        <path d="M2 4.5L5 1.5L8 4.5M2 8.5L5 5.5L8 8.5" stroke="#000" strokeWidth="1.3" />
      </Svg>
      <Svg className="ml-[8px] h-4 w-4">
        <path d="M5.5 3.5H15.5V12.5H5.5Z" fill="#eceae6" stroke="#6b6864" />
        <path d="M1 1V5H5V1M3 5V13.5H7" stroke="#55524e" />
        <path d="M10.5 6.5L15.5 15.5H5.5Z" fill="#f6d21d" stroke="#a88a10" strokeWidth="0.6" />
        <path d="M10.5 9.5V12.5M10.5 13.3V14.4" stroke="#000" />
      </Svg>
      <Svg className="ml-[8px] h-4 w-4">
        <path d="M0.5 5.5H3L7 1.5V14.5L3 10.5H0.5Z" fill="#f9f9f9" stroke="#77736e" />
        <path d="M9 5.5Q10.5 8 9 10.5M11 3.5Q13.5 8 11 12.5M13 1.5Q17 8 13 14.5" stroke="#8b8781" />
      </Svg>
      <Svg className="ml-[8px] h-4 w-4">
        <path d="M1.5 1V15.5" stroke="#6a6661" strokeWidth="1.4" />
        <path d="M2 2H8.5V4H15L13 7.5L14 9H8V8H2Z" fill="#fff" stroke="#77736e" strokeWidth="0.9" />
      </Svg>
      <span className="ml-[16px] w-[51px] tracking-[-0.1px]">8:36 AM</span>
      <DesktopIcon className="h-4 w-4" />
    </div>
  </div>
);

const Watermark = () => (
  <svg
    viewBox="0 0 200 70"
    className="absolute top-[607px] left-[1036px] h-[70px] w-[200px] opacity-75 drop-shadow-[0_0_2px_#aaa]"
    fill="#fff"
    fontFamily="Roboto, sans-serif"
  >
    <g transform="translate(0 51) scale(1 1.35)" fontSize="35" fontWeight="400">
      <text x="2" y="0" textLength="64" lengthAdjust="spacingAndGlyphs">ANY</text>
      <text x="132" y="0" textLength="65" lengthAdjust="spacingAndGlyphs">RUN</text>
    </g>
    <path
      d="M76 12V54M84 14V57M86 7L127 32L87 63V53L110 34L85 20"
      fill="none"
      stroke="#fff"
      strokeWidth="4"
      strokeLinejoin="round"
    />
  </svg>
);

const App = () => (
  <div className="relative flex h-[720px] w-[1280px] flex-col overflow-hidden bg-[#d5cfc8] font-['DejaVu_Sans_Condensed','DejaVu_Sans',sans-serif] text-[11px] leading-[13px] whitespace-nowrap text-black [font-stretch:condensed]">
    <ExplorerTitle />
    <div className="h-[2px] shrink-0" />
    <AddressBar />
    <CommandBar />
    <div className="flex h-[553px] shrink-0">
      <Sidebar />
      <div className="w-[3px] shrink-0 bg-[#d5cfc8]" />
      <FileList />
    </div>
    <div className="h-[5px] shrink-0" />
    <DetailsPane />
    <Taskbar />
    <TaskSchedulerWindow />
    <Watermark />
  </div>
);

export default App;
